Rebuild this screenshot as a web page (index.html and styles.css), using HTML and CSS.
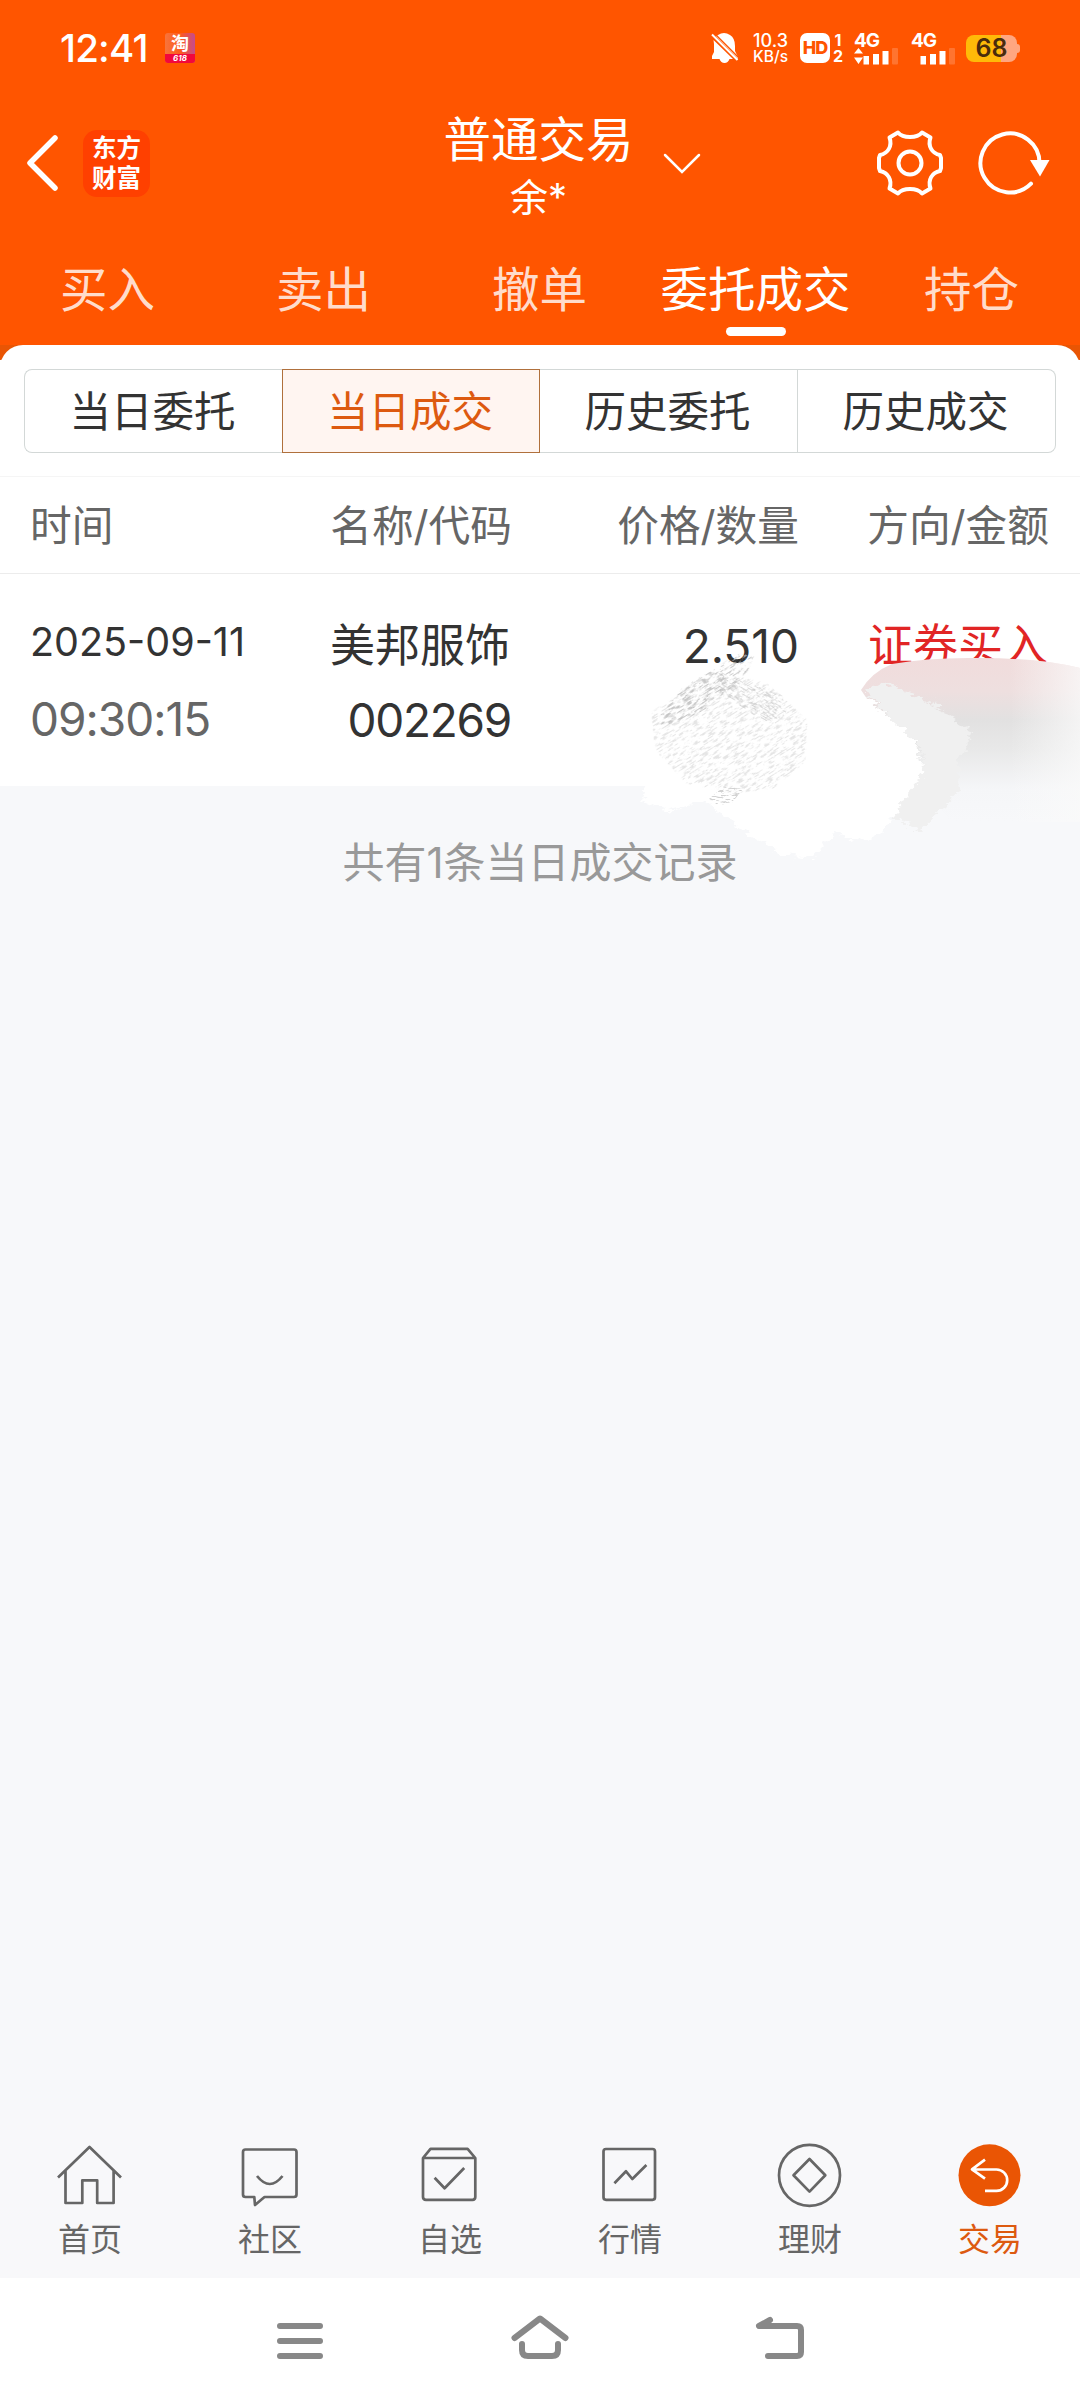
FILE: index.html
```html
<!DOCTYPE html>
<html lang="zh-CN">
<head>
<meta charset="utf-8">
<title>当日成交</title>
<link rel="stylesheet" href="styles.css">
</head>
<body>
<div class="app">
  <header class="header">
    <div class="status">
      <span class="clock">12:41</span>
      <span class="notice"><b>淘</b><i>618</i></span>
      <div class="status-right">
        <svg class="bell" width="28" height="32" viewBox="0 0 28 32"><path fill="#fff" d="M7 3Q13-1 19 3Q24 6 24 14V19L27 25V27L5 4.500Z"/><path fill="#fff" d="M2.500 8L22 27H18.500Q17 31 13.500 31Q10 31 8.500 27H1V24L3 20V12Z"/><path d="M1 2.500L26.500 28" stroke="#fff" stroke-width="2" fill="none"/><path d="M3.500 1.500L28 26" stroke="#f50" stroke-width="1.500"/></svg>
        <span class="speed"><span class="rate">10.3</span><span class="unit">KB/s</span></span>
        <span class="hd">HD</span>
        <span class="sims"><span>1</span><span>2</span></span>
        <span class="signal">
          <span class="net">4G</span>
          <svg width="46" height="18" viewBox="0 0 46 18"><path fill="#fff" d="M0 6.500L4.500 1L9 6.500ZM0 10.500H9L4.500 17ZM9.500 9h5.500v8.500H9.500ZM19 7h6v10.500h-6ZM28.500 4h6v13.500h-6Z"/><rect x="38" y="1" width="6" height="16.500" rx="1" fill="#ff7430"/></svg>
        </span>
        <span class="signal second">
          <span class="net">4G</span>
          <svg width="46" height="18" viewBox="0 0 46 18"><path fill="#fff" d="M9.500 9h5.500v8.500H9.500ZM19 7h6v10.500h-6ZM28.500 4h6v13.500h-6Z"/><rect x="38" y="1" width="6" height="16.500" rx="1" fill="#ff7430"/></svg>
        </span>
        <span class="battery">68</span><span class="nub"></span>
      </div>
    </div>
    <div class="titlebar">
      <div class="side">
        <svg class="back" width="32" height="56" viewBox="0 0 32 56"><path d="M29 3L4 28L29 53" fill="none" stroke="#fff" stroke-width="5.500" stroke-linecap="round" stroke-linejoin="round"/></svg>
        <span class="brand"><span>东方</span><span>财富</span></span>
      </div>
      <div class="title">
        <h1>普通交易</h1>
        <span class="user">余*</span>
        <svg class="chevron" width="38" height="22" viewBox="0 0 38 22"><path d="M2 2L19 19L36 2" fill="none" stroke="#fff" stroke-width="2.500" stroke-linecap="round"/></svg>
      </div>
      <div class="side tools">
        <svg width="68" height="68" viewBox="-34 -34 68 68" fill="none" stroke="#fff" stroke-width="4" stroke-linejoin="round"><path d="M-12 -30.500C-7 -24.500 7 -24.500 12 -30.500L20.500 -25.500C17.500 -17 22 -9.500 30 -8L31 -5V5L30 8C22 9.500 17.500 17 20.500 25.500L12 30.500C7 24.500 -7 24.500 -12 30.500L-20.500 25.500C-17.500 17 -22 9.500 -30 8L-31 5V-5L-30 -8C-22 -9.500 -17.500 -17 -20.500 -25.500Z"/><circle r="11.500"/></svg>
        <svg width="74" height="68" viewBox="-34 -34 74 68"><path d="M29.500 0A29.500 29.500 0 1 0 21 20.700" fill="none" stroke="#fff" stroke-width="4" stroke-linecap="round"/><path d="M20 -3H39.500L30 13.500Z" fill="#fff"/></svg>
      </div>
    </div>
    <nav class="tabs">
      <span>买入</span><span>卖出</span><span>撤单</span><span class="on">委托成交</span><span>持仓</span>
    </nav>
  </header>

  <main class="content">
    <div class="panel-wrap"><section class="panel">
      <div class="segments">
        <span>当日委托</span><span class="on">当日成交</span><span>历史委托</span><span>历史成交</span>
      </div>
    </section></div>
    <div class="row head"><span>时间</span><span>名称/代码</span><span>价格/数量</span><span>方向/金额</span></div>
    <div class="row trade">
      <div><span class="date">2025-09-11</span><span class="num time">09:30:15</span></div>
      <div><span class="name">美邦服饰</span><span class="num code">002269</span></div>
      <div><span class="num price">2.510</span></div>
      <div><span class="buy">证券买入</span></div>
      <svg class="smudge" width="480" height="240" viewBox="600 640 480 240">
        <defs>
          <linearGradient id="tint" x1="0" y1="0" x2="0" y2="1">
            <stop offset="0" stop-color="#f1dcdc"/><stop offset=".2" stop-color="#eedfdf"/><stop offset=".38" stop-color="#e2e1e1"/><stop offset=".55" stop-color="#e8e8e8"/><stop offset=".8" stop-color="#f5f6f8"/><stop offset="1" stop-color="#f7f8fa"/>
          </linearGradient>
          <linearGradient id="side" x1="0" y1="0" x2="1" y2="0"><stop offset="0" stop-color="#fafafa" stop-opacity="0"/><stop offset="1" stop-color="#fafafa" stop-opacity=".75"/></linearGradient>
          <filter id="rough" x="-10%" y="-10%" width="120%" height="120%"><feTurbulence type="fractalNoise" baseFrequency=".09 .2" numOctaves="3" seed="4"/><feDisplacementMap in="SourceGraphic" scale="14" xChannelSelector="R" yChannelSelector="G"/></filter>
          <filter id="grain" x="-10%" y="-10%" width="120%" height="120%">
            <feTurbulence type="fractalNoise" baseFrequency=".12 .6" numOctaves="4" seed="9" result="n"/>
            <feColorMatrix in="n" values="0 0 0 0 .52  0 0 0 0 .52  0 0 0 0 .52  7 0 0 0 -3.650" result="s"/>
            <feComposite in="s" in2="SourceGraphic" operator="in"/>
          </filter>
        </defs>
        <path fill="url(#tint)" d="M861 690Q872 672 892 664Q930 657 980 658Q1040 658 1080 668V822H950Z"/>
        <path fill="url(#side)" d="M1010 650H1080V822H1010Z" clip-path="url(#cap)"/>
        <clipPath id="cap"><path d="M861 690Q872 672 892 664Q930 657 980 658Q1040 658 1080 668V822H950Z"/></clipPath>
        <path filter="url(#rough)" fill="#fff" d="M646 780L642 800L670 812L705 800L740 828L782 855L812 858L835 833L868 842L894 816L914 795L924 770L916 742L864 694L850 700L760 690Z"/>
        <path filter="url(#rough)" fill="#f0f0f0" d="M864 689L892 684L935 704L971 732L968 747L957 756L962 786L945 806L919 831L894 817L903 797L919 780L924 762L918 744L890 718Z"/>
        <g transform="rotate(-32 725 730)" opacity=".4"><path filter="url(#grain)" d="M672 676L742 672L768 695L785 712L792 735L800 765L776 800L735 805L698 788L664 755L655 710Z"/></g>
        <g transform="rotate(-32 705 695)" opacity=".85"><path filter="url(#grain)" d="M652 690L690 677L755 678L768 688L748 701L690 708L652 700Z"/></g>
        <g transform="rotate(30 740 700)" opacity=".6"><path filter="url(#grain)" d="M708 686L774 675L788 689L774 707L712 703Z"/></g>
        <path filter="url(#grain)" opacity=".7" d="M709 799L724 786L743 789L731 804L718 805Z"/>
      </svg>
    </div>
    <p class="summary">共有1条当日成交记录</p>
  </main>

  <nav class="tabbar">
    <a><svg width="72" height="72" viewBox="54 2139 72 72"><path d="M58 2177.500L89.500 2147L121 2177.500M65.500 2171V2203H82.300V2180.300H97.200V2203H113.600V2171"/></svg>首页</a>
    <a><svg width="72" height="72" viewBox="234 2139 72 72"><path d="M245.500 2149.500H294Q296.500 2149.500 296.500 2152V2194.500Q296.500 2197 294 2197H264.500L255 2205L254.300 2197H245.500Q243 2197 243 2194.500V2152Q243 2149.500 245.500 2149.500ZM257 2176Q269.800 2192 282.500 2176"/></svg>社区</a>
    <a><svg width="72" height="72" viewBox="414 2139 72 72"><path d="M423 2158L430.500 2148.800H467.600L475.300 2158V2197Q475.300 2199.800 472.500 2199.800H426Q423 2199.800 423 2197ZM423 2158H475.300M434.600 2177.700L444.600 2188.300L464.200 2168"/></svg>自选</a>
    <a><svg width="72" height="72" viewBox="594 2139 72 72"><rect x="603.500" y="2149" width="51.500" height="50.800" rx="2.500"/><path d="M614.400 2183.300L626 2171.300L632.300 2179L646.400 2165"/></svg>行情</a>
    <a><svg width="72" height="72" viewBox="774 2139 72 72"><circle cx="809.500" cy="2175.300" r="30.500"/><path d="M809.500 2159L825.300 2175.300L809.500 2191.600L793.500 2175.300Z"/></svg>理财</a>
    <a class="on"><svg width="72" height="72" viewBox="954 2139 72 72"><circle class="disc" cx="989.500" cy="2175.300" r="31"/><path d="M985 2159.700L972 2169.300L985 2178.700M972 2169.500H996.500A10.700 10.700 0 0 1 996.500 2190.900H985"/></svg>交易</a>
  </nav>
  <div class="sysnav">
    <svg width="60" height="50" viewBox="270 2312 60 50"><path d="M280 2326H320M280 2341H320M280 2356H320"/></svg>
    <svg width="60" height="50" viewBox="510 2312 60 50"><path d="M514.500 2338L540 2318.500L565.500 2338M522 2344V2350Q522 2356 528 2356H552Q558 2356 558 2350V2344"/></svg>
    <svg width="60" height="50" viewBox="750 2312 60 50"><path d="M770 2320L759 2326H797Q801 2326 801 2330V2352Q801 2356 797 2356H768"/></svg>
  </div>
</div>
</body>
</html>
```
FILE: styles.css
```css
* { box-sizing: border-box; }
body { margin: 0; font-family: Inter, "Noto Sans CJK SC", sans-serif; background: #fff; }
svg { display: block; flex: none; }
.app { width: 1080px; height: 2404px; display: flex; flex-direction: column; overflow: hidden; }

.header { height: 345px; background: #ff5500; color: #fff; }
.status { height: 96px; padding: 0 60px 0 60px; display: flex; align-items: center; }
.clock { width: 105px; font-size: 38.500px; line-height: 48px; font-weight: 450; letter-spacing: -.8px; }
.notice { width: 30px; height: 30px; border-radius: 3px; overflow: hidden; display: flex; flex-direction: column; align-items: center; background: linear-gradient(90deg, #f7743c, #ff5a1c 50%, #c54a8e); }
.notice b { font-size: 18px; line-height: 21px; height: 21px; }
.notice i { width: 30px; height: 9px; background: #f2083c; font-size: 8px; line-height: 9px; text-align: center; font-weight: 700; }
.status-right { margin-left: auto; display: flex; align-items: center; height: 32px; }
.speed { width: 37px; margin-left: 12px; display: flex; flex-direction: column; align-items: flex-end; font-weight: 500; }
.rate { font-size: 18px; line-height: 17px; }
.unit { font-size: 15.500px; line-height: 15px; }
.hd { margin-left: 12px; width: 30px; height: 30px; border-radius: 7px; background: #fff; color: #f50; font-size: 18px; line-height: 30px; font-weight: 800; text-align: center; letter-spacing: -1px; }
.sims { width: 12px; margin-left: 2px; display: flex; flex-direction: column; align-items: center; font-size: 16px; line-height: 16px; font-weight: 700; }
.signal { width: 46px; height: 32px; margin-left: 10px; display: flex; flex-direction: column; }
.signal.second { margin-left: 11px; }
.net { font-size: 19px; line-height: 17px; height: 15px; font-weight: 700; letter-spacing: -1px; }
.battery { margin-left: 9px; width: 51px; height: 27px; border-radius: 8px; background: linear-gradient(90deg, #ffba08 35px, #ffa680 35px); color: #4a2c0c; font-size: 25px; line-height: 27px; font-weight: 600; text-align: center; }
.nub { width: 3px; height: 9px; background: #ffa680; border-radius: 0 3px 3px 0; }

.titlebar { height: 134px; display: flex; align-items: center; justify-content: space-between; }
.side { width: 300px; display: flex; align-items: center; padding-left: 26px; }
.brand { margin-left: 25px; width: 67px; height: 67px; border-radius: 14px; background: #ff4000; display: flex; flex-direction: column; align-items: center; justify-content: center; font-size: 24.500px; line-height: 30px; font-weight: 700; padding-bottom: 1px; }
.title { position: relative; display: flex; flex-direction: column; align-items: center; padding: 6px 3px 0 0; }
.title h1 { margin: 0; font-size: 47.500px; line-height: 62px; font-weight: 400; }
.user { font-size: 38px; line-height: 52px; }
.chevron { position: absolute; left: 219px; top: 50px; }
.tools { padding: 0 30px 0 0; justify-content: flex-end; gap: 32px; }
.tabs { height: 115px; display: grid; grid-template-columns: repeat(5, 216px); }
.tabs span { font-size: 47.500px; line-height: 120px; text-align: center; color: #ffdccb; white-space: nowrap; position: relative; left: -.5px; }
.tabs .on { color: #fff; }
.tabs .on::after { content: ""; position: absolute; left: 78px; top: 97px; width: 60px; height: 9px; border-radius: 5px; background: #fff; }

.content { flex: 1; background: #f7f8fa; }
.panel-wrap { background: linear-gradient(#e95504 15px, #fff 15px); }
.panel { height: 132px; padding: 24px; background: #fff; border-radius: 23px 23px 0 0; border-bottom: 1px solid #f5f5f5; }
.segments { display: grid; grid-template-columns: repeat(4, 1fr); height: 84px; }
.segments span { border: 1px solid #d3d8d7; border-left-width: 0; font-size: 41.500px; line-height: 84px; height: 84px; color: #333; text-align: center; padding-right: 2px; }
.segments span:first-child { border-left-width: 1px; border-right-width: 0; border-radius: 8px 0 0 8px; }
.segments span:last-child { border-radius: 0 8px 8px 0; }
.segments .on { border: 1px solid #b0703c; background: #fff5f1; color: #dd5a10; }

.row { display: grid; grid-template-columns: 270px 212px 287px 250px; padding: 0 30px; background: #fff; text-align: right; }
.row > :first-child { text-align: left; }
.head { height: 97px; border-bottom: 1px solid #ececec; font-size: 41.700px; line-height: 98px; color: #666; }
.trade { position: relative; height: 212px; padding-top: 36px; font-size: 45px; line-height: 72px; color: #333; }
.trade > div { display: flex; flex-direction: column; }
.num { font-size: 46px; line-height: 76px; }
.name { padding-right: 2px; }
.code { letter-spacing: -1.300px; padding-right: 1px; }
.time { color: #666; letter-spacing: -1px; }
.date { font-size: 39.500px; line-height: 65px; padding-bottom: 6px; }
.price { line-height: 73px; }
.buy { color: #e12525; padding-right: 1px; }
.smudge { position: absolute; left: 600px; top: 66px; }
.summary { margin: 0; font-size: 42px; line-height: 153px; color: #999; text-align: center; }

.tabbar { height: 168px; display: grid; grid-template-columns: repeat(6, 1fr); background: #f8f8fa; padding-top: 29px; }
.tabbar a { display: flex; flex-direction: column; align-items: center; font-size: 32px; line-height: 57px; color: #666; }
.tabbar svg { fill: none; stroke: #666; stroke-width: 2.700; stroke-linejoin: round; }
.tabbar .on { color: #dd5a10; }
.tabbar .on svg { stroke: #fff; }
.tabbar .disc { fill: #ea5504; stroke: none; }
.sysnav { height: 126px; padding: 34px 270px 0; background: #fff; display: flex; justify-content: space-between; }
.sysnav svg { fill: none; stroke: #888; stroke-width: 6; stroke-linecap: round; stroke-linejoin: round; }
```
